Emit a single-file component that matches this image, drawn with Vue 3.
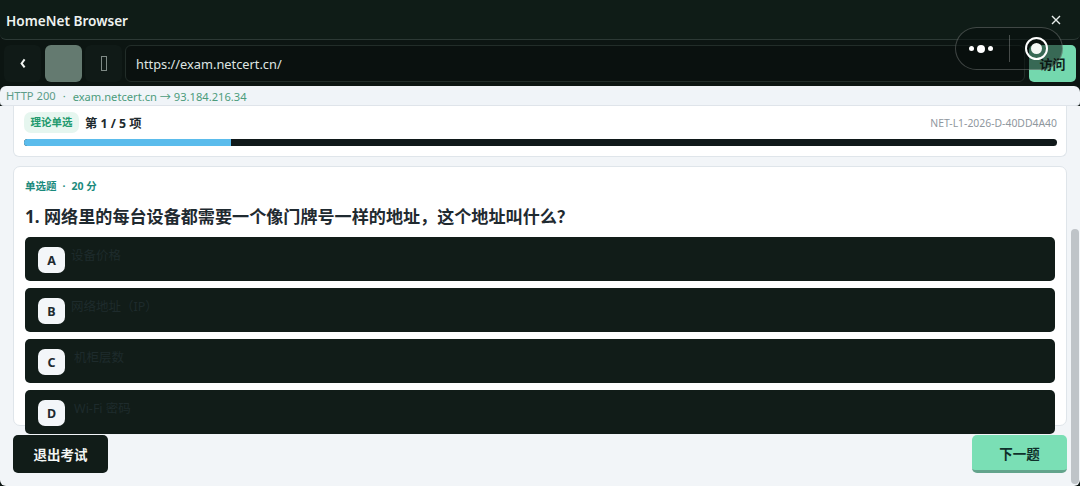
<script setup>
import { ref } from "vue";

const url = ref("https://exam.netcert.cn/");
const options = [
  { key: "A", text: "设备价格", indent: false },
  { key: "B", text: "网络地址（IP）", indent: false },
  { key: "C", text: "机柜层数", indent: true },
  { key: "D", text: "Wi-Fi 密码", indent: true },
];
const progress = ref(20);
</script>

<template>
  <div class="page">
    <header class="titlebar">
      <span class="title">HomeNet Browser</span>
      <svg class="close" width="12" height="12" viewBox="0 0 12 12">
        <path d="M2 2 L10 10 M10 2 L2 10" stroke="#e8eeeb" stroke-width="1.4" fill="none" />
      </svg>
    </header>

    <div class="toolbar">
      <button class="nav back">
        <svg width="8" height="12" viewBox="0 0 8 12">
          <path d="M5.6 2.4 L2.6 6.4 L5.6 10.4" stroke="#f2f5f3" stroke-width="2" fill="none" />
        </svg>
      </button>
      <button class="nav grey"></button>
      <button class="nav tofu"><span class="tofu-box"></span></button>
      <div class="url">{{ url }}</div>
      <button class="visit">访问</button>
    </div>

    <div class="status">
      <span class="code">HTTP 200</span>
      <span class="dot">·</span>
      <span>exam.netcert.cn → 93.184.216.34</span>
    </div>

    <main class="content">
      <section class="progress-card">
        <div class="progress-head">
          <span class="tag">理论单选</span>
          <span class="count">第 1 / 5 项</span>
          <span class="paper">NET-L1-2026-D-40DD4A40</span>
        </div>
        <div class="track">
          <div class="fill" :style="{ width: progress + '%' }"></div>
        </div>
      </section>

      <section class="question-card">
        <div class="meta"><span>单选题</span><span>·</span><span>20 分</span></div>
        <h2 class="question">1. 网络里的每台设备都需要一个像门牌号一样的地址，这个地址叫什么？</h2>
        <div class="options">
          <div v-for="o in options" :key="o.key" class="option">
            <span class="letter">{{ o.key }}</span>
            <span class="opt-text" :class="{ indent: o.indent }">{{ o.text }}</span>
          </div>
        </div>
      </section>

      <footer class="actions">
        <button class="exit">退出考试</button>
        <button class="next">下一题</button>
      </footer>

      <div class="scrollbar"></div>
    </main>

    <div class="capsule">
      <span class="dots"><i></i><i class="big"></i><i></i></span>
      <span class="divider"></span>
      <span class="target"><i></i></span>
    </div>
  </div>
</template>

<style>
html, body { margin: 0; background: #0e1a16; }
</style>

<style scoped>
.page {
  position: relative;
  width: 1080px;
  height: 486px;
  overflow: hidden;
  background: #0c1512;
  font-family: "Noto Sans", "Noto Sans CJK SC", sans-serif;
}
button { font-family: inherit; border: 0; padding: 0; }

.titlebar {
  height: 39px;
  display: flex;
  align-items: center;
  justify-content: space-between;
  padding: 2px 18px 0 6px;
  box-sizing: content-box;
  background: #0f1c17;
  border-bottom: 1px solid #2c3935;
  border-radius: 0 0 6px 6px;
  margin-top: -2px;
}
.title { color: #eef2f0; font-size: 13.6px; font-weight: 600; transform: translateY(1px); }

.toolbar {
  height: 46px;
  display: flex;
  align-items: center;
  gap: 3px;
  padding: 0 4px;
}
.nav {
  width: 37px;
  height: 37px;
  border-radius: 6px;
  background: #101a17;
  display: flex;
  align-items: center;
  justify-content: center;
}
.back { margin-right: 1px; }
.grey { background: #647a70; }
.tofu-box {
  width: 4px;
  height: 13px;
  border: 1px solid #7f8a86;
}
.url {
  flex: 1;
  height: 37px;
  line-height: 36px;
  box-sizing: border-box;
  padding-left: 10px;
  color: #dfe5e2;
  font-size: 12.8px;
  background: #0a110f;
  border: 1px solid #222d29;
  border-radius: 6px;
}
.visit {
  width: 47px;
  height: 37px;
  margin-left: 1px;
  border-radius: 5px;
  background: #74d8ae;
  color: #10221a;
  font-size: 13px;
  font-weight: 600;
}

.status {
  height: 20px;
  box-sizing: border-box;
  display: flex;
  align-items: center;
  gap: 7px;
  padding: 0 6px;
  background: #f0f4f8;
  border-bottom: 1px solid #dfe4ea;
  border-radius: 6px 6px 4px 4px;
  color: #4c9c7c;
  font-size: 11.15px;
}
.status .code { color: #5d9c88; }

.content {
  position: relative;
  height: 380px;
  box-sizing: border-box;
  padding: 0 13px;
  background: #f2f5f8;
  border-radius: 0 0 6px 6px;
}

.progress-card {
  height: 51px;
  box-sizing: border-box;
  padding: 6px 9px 0 10px;
  background: #fff;
  border: 1px solid #dfe5ea;
  border-top: 0;
  border-radius: 0 0 6px 6px;
}
.progress-head {
  display: flex;
  align-items: center;
  height: 21px;
}
.tag {
  width: 55px;
  height: 21px;
  line-height: 21px;
  text-align: center;
  border-radius: 7px;
  background: #e6f6ef;
  color: #1f9a6e;
  font-size: 10.5px;
  font-weight: 700;
}
.count {
  margin-left: 6px;
  color: #1e2a2e;
  font-size: 12.3px;
  font-weight: 700;
}
.paper {
  margin-left: auto;
  color: #8f979e;
  font-size: 10.4px;
}
.track {
  height: 7px;
  margin-top: 6px;
  border-radius: 4px;
  background: #10191a;
  overflow: hidden;
}
.fill {
  height: 100%;
  background: #5bbcec;
}

.question-card {
  height: 260px;
  box-sizing: border-box;
  margin-top: 9px;
  padding: 12px 11px 0;
  background: #fff;
  border: 1px solid #dfe5ea;
  border-radius: 7px;
}
.meta {
  display: flex;
  gap: 6px;
  height: 14px;
  line-height: 14px;
  color: #1a8a7c;
  font-size: 10.5px;
  font-weight: 700;
}
.question {
  margin: 12px 0 0;
  height: 24px;
  line-height: 24px;
  color: #1f2a30;
  font-size: 17.1px;
  font-weight: 700;
}
.options {
  margin-top: 8px;
  display: flex;
  flex-direction: column;
  gap: 7px;
}
.option {
  height: 44px;
  box-sizing: border-box;
  display: flex;
  padding: 10px 0 0 13px;
  background: #111c18;
  border-radius: 5px;
}
.letter {
  width: 27px;
  height: 26px;
  line-height: 27px;
  text-align: center;
  border-radius: 7px;
  background: #f3f6f9;
  color: #1e2a30;
  font-size: 12.5px;
  font-weight: 700;
}
.opt-text {
  margin-left: 6px;
  color: #1e2b2c;
  font-size: 12.5px;
  line-height: 18px;
}
.opt-text.indent { margin-left: 9px; }

.actions {
  display: flex;
  justify-content: space-between;
  margin-top: 9px;
}
.exit {
  width: 95px;
  height: 38px;
  border-radius: 5px;
  background: #111c18;
  color: #f2f5f3;
  font-size: 13.5px;
  font-weight: 700;
}
.next {
  width: 95px;
  height: 38px;
  border-radius: 5px;
  background: #7adfb5;
  border-bottom: 3px solid #63a48c;
  color: #10302a;
  font-size: 13.5px;
  font-weight: 700;
}

.scrollbar {
  position: absolute;
  right: 1px;
  top: 123px;
  bottom: 2px;
  width: 8px;
  border-radius: 4px;
  background: #bfc4c8;
}

.capsule {
  position: absolute;
  left: 955px;
  top: 27px;
  width: 108px;
  height: 43px;
  box-sizing: border-box;
  border: 1px solid rgba(255, 255, 255, 0.22);
  border-radius: 22px;
  background: rgba(8, 14, 12, 0.55);
  display: flex;
  align-items: center;
}
.dots {
  display: flex;
  align-items: center;
  gap: 3px;
  margin-left: 13px;
}
.dots i {
  width: 5px;
  height: 5px;
  border-radius: 50%;
  background: #fff;
}
.dots i.big { width: 8px; height: 8px; }
.divider {
  width: 1px;
  height: 27px;
  margin-left: 16px;
  background: rgba(255, 255, 255, 0.25);
}
.target {
  width: 23px;
  height: 23px;
  box-sizing: border-box;
  margin-left: 15px;
  border: 2.5px solid #fff;
  border-radius: 50%;
  display: flex;
  align-items: center;
  justify-content: center;
}
.target i {
  width: 11px;
  height: 11px;
  border-radius: 50%;
  background: #f4f7f5;
}
</style>
